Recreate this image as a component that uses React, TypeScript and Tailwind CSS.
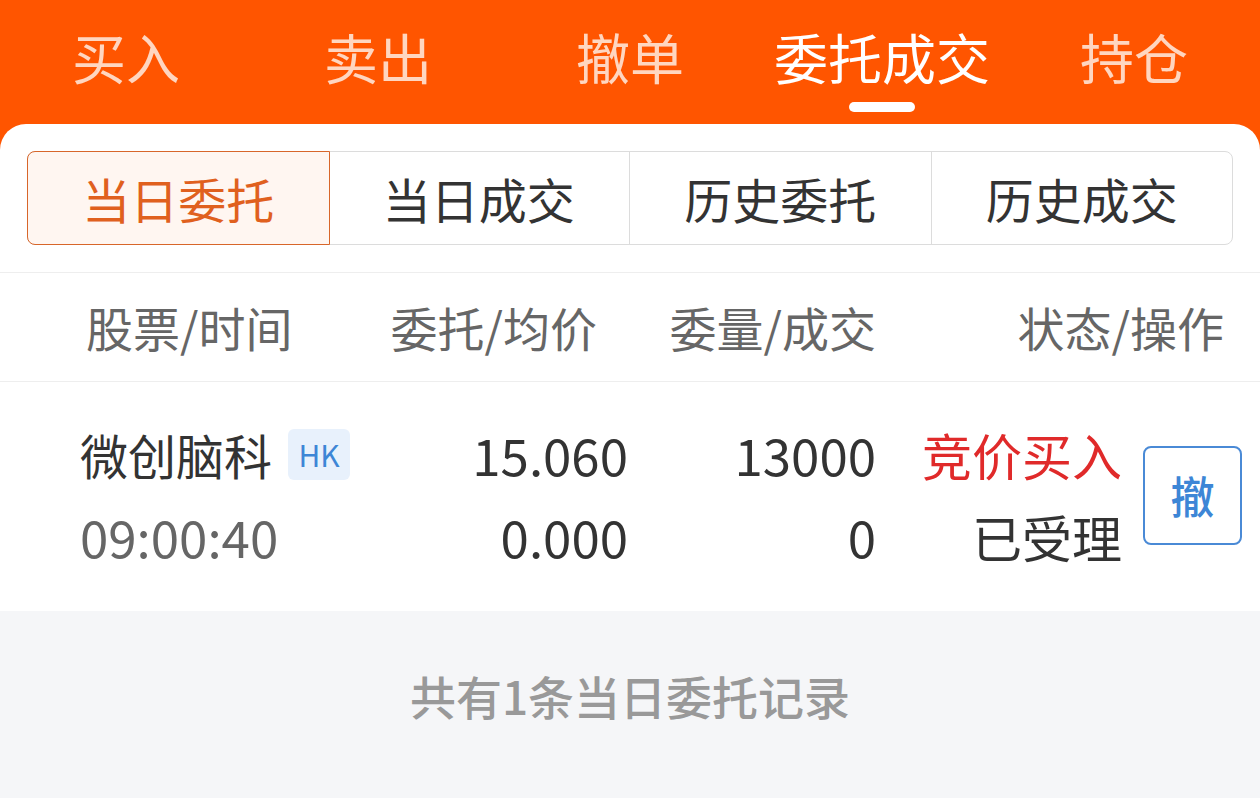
const topTabs = ['买入', '卖出', '撤单', '委托成交', '持仓'];
const segments = ['当日委托', '当日成交', '历史委托', '历史成交'];

const font = { fontFamily: '"Noto Sans CJK SC", "Noto Sans", sans-serif' };

export default function App() {
  return (
    <div className="w-[1260px] h-[798px] overflow-hidden bg-[#ff5500]" style={font}>
      {/* 顶部标签 */}
      <div className="flex h-[124px]">
        {topTabs.map((t, i) => {
          const active = i === 3;
          return (
            <div key={t} className="relative flex-1 flex items-start justify-center pt-[24px]">
              <span
                className={`text-[54px] leading-[66px] ${active ? 'text-white' : 'text-[#ffd6c0]'}`}
              >
                {t}
              </span>
              {active && (
                <div className="absolute left-1/2 top-[102px] -translate-x-1/2 w-[66px] h-[10px] rounded-full bg-white" />
              )}
            </div>
          );
        })}
      </div>

      <div className="bg-white rounded-t-[26px] h-[674px] flex flex-col">
        {/* 分段选择 */}
        <div className="px-[27px] pt-[27px] pb-[27px]">
          <div className="flex h-[94px] rounded-[8px] border border-[#dcdcdc]">
            {segments.map((s, i) => {
              const active = i === 0;
              return (
                <div
                  key={s}
                  className={`flex-1 flex items-center justify-center text-[48px] ${
                    active
                      ? '-m-px rounded-l-[8px] border border-[#d8662a] bg-[#fff6f1] text-[#e0601e]'
                      : 'text-[#333333]'
                  } ${i > 1 ? 'border-l border-[#dcdcdc]' : ''}`}
                >
                  {s}
                </div>
              );
            })}
          </div>
        </div>

        {/* 表头 */}
        <div className="flex items-center h-[110px] border-t border-b border-[#eeeeee] text-[47px] text-[#666666] pl-[86px]">
          <div className="w-[254px]">股票/时间</div>
          <div className="w-[257px] text-right">委托/均价</div>
          <div className="w-[279px] text-right">委量/成交</div>
          <div className="w-[348px] text-right">状态/操作</div>
        </div>

        {/* 数据行 */}
        <div className="flex items-center h-[229px] pl-[80px] pb-[3px]">
          <div className="flex flex-col gap-[20px] w-[300px] shrink-0">
            <div className="flex items-center h-[62px] whitespace-nowrap">
              <span className="text-[48px] text-[#333333]">微创脑科</span>
              <span className="ml-[16px] h-[51px] w-[62px] flex items-center justify-center rounded-[6px] bg-[#e8f1fc] text-[30px] text-[#3d86d6]">
                HK
              </span>
            </div>
            <div className="h-[62px] flex items-center text-[51px] text-[#666666]">09:00:40</div>
          </div>
          <div className="flex flex-col gap-[20px] w-[248px] text-right text-[51px] text-[#333333]">
            <div className="h-[62px] leading-[62px]">15.060</div>
            <div className="h-[62px] leading-[62px]">0.000</div>
          </div>
          <div className="flex flex-col gap-[20px] w-[248px] text-right text-[51px] text-[#333333]">
            <div className="h-[62px] leading-[62px]">13000</div>
            <div className="h-[62px] leading-[62px]">0</div>
          </div>
          <div className="flex flex-col gap-[20px] w-[246px] text-right text-[50px]">
            <div className="h-[62px] leading-[62px] text-[#e02a2a]">竞价买入</div>
            <div className="h-[62px] leading-[62px] text-[#333333]">已受理</div>
          </div>
          <div className="ml-[21px] w-[99px] h-[99px] flex items-center justify-center rounded-[8px] border-2 border-[#4a8ad6] text-[44px] font-medium text-[#3d86d6]">
            撤
          </div>
        </div>

        {/* 底部统计 */}
        <div className="flex-1 bg-[#f5f6f8] flex items-start justify-center pt-[50px]">
          <span className="text-[46px] font-medium text-[#999999]">共有1条当日委托记录</span>
        </div>
      </div>
    </div>
  );
}
